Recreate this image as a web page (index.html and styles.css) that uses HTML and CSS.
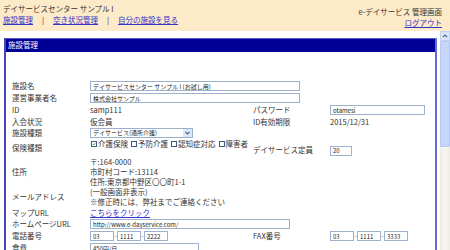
FILE: index.html
```html
<!DOCTYPE html>
<html lang="ja">
<head>
<meta charset="utf-8">
<title>施設管理</title>
<link rel="stylesheet" href="styles.css">
</head>
<body>
<header class="top">
  <div class="top-left">
    <div class="site-title">デイサービスセンター サンプル I</div>
    <nav class="nav"><a href="#">施設管理</a><span class="sep">|</span><a href="#">空き状況管理</a><span class="sep">|</span><a href="#">自分の施設を見る</a></nav>
  </div>
  <div class="top-right">
    <div class="sys">e-デイサービス 管理画面</div>
    <a href="#">ログアウト</a>
  </div>
</header>
<div class="frame">
  <main class="main">
    <section class="panel">
      <div class="panel-head">施設管理</div>
      <table class="form">
        <colgroup><col class="c1"><col class="c2"><col class="c3"><col class="c4"></colgroup>
        <tr class="h12"><th>施設名</th><td colspan="3"><input class="in w210" value="デイサービスセンター サンプル I (お試し用)"></td></tr>
        <tr class="h12"><th>運営事業者名</th><td colspan="3"><input class="in w210" value="株式会社サンプル"></td></tr>
        <tr class="h12"><th>ID</th><td>samp111</td><th>パスワード</th><td><input class="in w95" value="otamesi"></td></tr>
        <tr class="h11"><th>入会状況</th><td>仮会員</td><th>ID有効期限</th><td>2015/12/31</td></tr>
        <tr class="h11"><th>施設種類</th><td colspan="3"><div class="select"><span class="sel-text">デイサービス(通所介護)</span><span class="sel-btn"><svg width="5" height="4" viewBox="0 0 5 4"><path d="M0.5 1 L2.5 3 L4.5 1" fill="none" stroke="#4d6185" stroke-width="1.1"/></svg></span></div></td></tr>
        <tr class="h19"><th>保険種類</th>
          <td class="top1"><span class="checks"><span class="cb on"><svg width="6" height="6" viewBox="0 0 6 6"><path d="M1 3 L2.4 4.5 L5 1.3" fill="none" stroke="#21a121" stroke-width="1.2"/></svg></span>介護保険<span class="cb"></span>予防介護<span class="cb"></span>認知症対応<span class="cb"></span>障害者</span></td>
          <th class="top7">デイサービス定員</th><td class="top7"><input class="in w22" value="20"></td></tr>
        <tr class="h30"><th>住所</th><td colspan="3">〒:164-0000<br>市町村コード:13114<br>住所:東京都中野区〇〇町1-1</td></tr>
        <tr class="h20"><th>メールアドレス</th><td colspan="3">(一般画面非表示)<br>※修正時には、弊社までご連絡ください</td></tr>
        <tr class="h11"><th>マップURL</th><td colspan="3"><a href="#">こちらをクリック</a></td></tr>
        <tr class="h12"><th>ホームページURL</th><td colspan="3"><input class="in w200" value="http://www.e-dayservice.com/"></td></tr>
        <tr class="h12"><th>電話番号</th>
          <td><span class="tel"><input class="in w24" value="03"><span class="dash">-</span><input class="in w24" value="1111"><span class="dash">-</span><input class="in w24" value="2222"></span></td>
          <th>FAX番号</th>
          <td><span class="tel"><input class="in w24" value="03"><span class="dash">-</span><input class="in w24" value="1111"><span class="dash">-</span><input class="in w24" value="3333"></span></td></tr>
        <tr class="h12"><th>食費</th><td colspan="3"><input class="in w110" value="450円/日"></td></tr>
      </table>
    </section>
  </main>
  <div class="scrollbar">
    <div class="sb-up"><svg width="6" height="4" viewBox="0 0 6 4"><path d="M0.8 3.2 L3 1 L5.2 3.2" fill="none" stroke="#4d6185" stroke-width="1.1"/></svg></div>
    <div class="sb-thumb"></div>
    <div class="sb-track"></div>
  </div>
</div>
</body>
</html>
```

FILE: styles.css
```css
html, body {
  margin: 0;
  padding: 0;
}
body {
  width: 450px;
  height: 250px;
  overflow: hidden;
  font-family: "Noto Sans CJK JP", "Noto Sans", sans-serif;
  font-size: 7.5px;
  color: #333;
  background: #fff;
}
a {
  color: #3434c8;
  text-decoration: underline;
}
.top {
  height: 31px;
  background: #fdeac8;
  display: flex;
  justify-content: space-between;
  box-sizing: border-box;
}
.top-left {
  padding: 3px 0 0 3px;
  line-height: 11px;
}
.sep {
  margin: 0 9px;
  color: #333;
}
.top-right {
  padding: 6px 8px 0 0;
  line-height: 11px;
  text-align: right;
}
.frame {
  display: flex;
  height: 219px;
}
.main {
  width: 440px;
  padding-top: 7px;
  box-sizing: border-box;
}
.panel {
  margin-left: 4px;
  width: 433px;
  height: 212px;
  box-sizing: border-box;
  border-left: 2px solid #4646b8;
  border-right: 2px solid #6a6acc;
}
.panel-head {
  height: 14px;
  line-height: 14px;
  background: #000096;
  color: #fff;
  padding-left: 2px;
  box-shadow: inset 0 1px 0 #5a5ac8;
}
.form {
  margin: 28px 0 0 6px;
  border-collapse: collapse;
  table-layout: fixed;
  width: 419px;
}
.c1 { width: 78px; }
.c2 { width: 163px; }
.c3 { width: 77px; }
.form th, .form td {
  padding: 0;
  font-weight: normal;
  text-align: left;
  vertical-align: middle;
  line-height: 10px;
  white-space: nowrap;
}
.h11 { height: 11px; }
.h12 { height: 12px; }
.h19 { height: 19px; }
.h20 { height: 20px; }
.h30 { height: 30px; }
.form td.top1 {
  vertical-align: top;
  padding-top: 1px;
}
.form .top7 {
  vertical-align: top;
  padding-top: 7px;
}
.in {
  box-sizing: border-box;
  height: 10px;
  border: 1px solid #9db0cc;
  padding: 0 2px;
  margin: 0;
  font-family: "Noto Sans CJK JP", "Noto Sans", sans-serif;
  font-size: 6px;
  color: #222;
  background: #fff;
  vertical-align: middle;
  outline: none;
}
.w210 { width: 210px; }
.w200 { width: 200px; }
.w110 { width: 109px; }
.w95 { width: 95px; }
.w22 { width: 22px; }
.w24 { width: 24px; }
.tel {
  display: inline-flex;
  align-items: center;
}
.dash {
  width: 3px;
  text-align: center;
  font-size: 6px;
  line-height: 10px;
}
.select {
  display: flex;
  align-items: center;
  width: 103px;
  height: 10px;
  box-sizing: border-box;
  border: 1px solid #9db0cc;
  background: #fff;
}
.sel-text {
  flex: 1;
  padding-left: 2px;
  font-size: 6px;
  line-height: 8px;
  color: #222;
}
.sel-btn {
  width: 9px;
  height: 8px;
  background: #dce6fb;
  display: flex;
  align-items: center;
  justify-content: center;
}
.checks {
  display: inline-flex;
  align-items: center;
}
.cb {
  width: 6px;
  height: 6px;
  box-sizing: border-box;
  border: 1px solid #3c5c8c;
  background: #fff;
  margin: 0 1px 0 3px;
  display: inline-flex;
  align-items: center;
  justify-content: center;
}
.cb:first-child {
  margin-left: 1px;
}
.cb svg {
  display: block;
}
.scrollbar {
  width: 10px;
  display: flex;
  flex-direction: column;
  background: #f4f2ec;
}
.sb-up {
  height: 10px;
  background: #dbe6fc;
  border: 1px solid #c2d2f4;
  box-sizing: border-box;
  display: flex;
  align-items: center;
  justify-content: center;
}
.sb-thumb {
  height: 106px;
  background: #c6d6fb;
  border: 1px solid #b4c8f4;
  box-sizing: border-box;
  border-radius: 1px;
}
.sb-track {
  flex: 1;
  background: linear-gradient(to right, #eeece4, #f8f7f2 50%, #eeece4);
}
```
